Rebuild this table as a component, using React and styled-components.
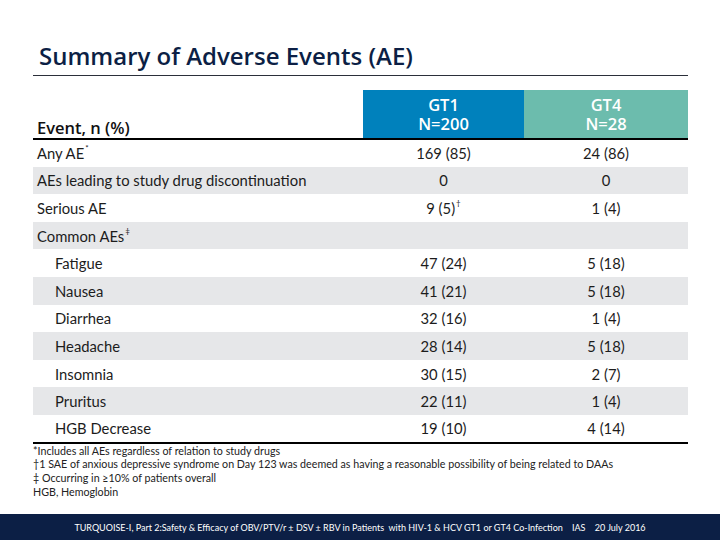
import React from 'react';
import styled, { createGlobalStyle } from 'styled-components';

const GlobalStyle = createGlobalStyle`
  html, body {
    margin: 0;
    padding: 0;
    background: #ffffff;
  }
  body {
    font-family: "Lato", "Liberation Sans", sans-serif;
  }
`;

const Slide = styled.div`
  width: 720px;
  height: 540px;
  display: flex;
  flex-direction: column;
  background: #ffffff;
  overflow: hidden;
`;

const Content = styled.div`
  padding: 0 32px 0 33px;
`;

const Title = styled.h1`
  margin: 40px 0 0 0;
  padding: 0 0 4px 6px;
  font-family: "Open Sans", sans-serif;
  font-weight: 600;
  font-size: 24px;
  line-height: 31px;
  color: #0c1f45;
  border-bottom: 1px solid #2b2f3a;
`;

const Table = styled.table`
  width: 655px;
  margin-top: 14px;
  border-collapse: collapse;
  table-layout: fixed;
  font-family: "Lato", "Liberation Sans", sans-serif;
  font-size: 14.8px;
  color: #1c1c1c;
`;

const HeadRow = styled.tr`
  height: 49px;
  border-bottom: 2px solid #000000;
`;

const EventHead = styled.th`
  text-align: left;
  vertical-align: bottom;
  padding: 0 0 0 4px;
  font-family: "Open Sans", sans-serif;
  font-weight: 600;
  font-size: 16.5px;
  line-height: 20px;
  color: #111111;
`;

const GroupHead = styled.th`
  background: ${p => p.$color};
  color: #ffffff;
  font-family: "Open Sans", sans-serif;
  font-weight: 600;
  font-size: 16.5px;
  text-align: center;
  vertical-align: middle;
  padding-top: 1px;
`;

const HeadLine = styled.div`
  line-height: 19px;
  height: 19px;
`;

const Row = styled.tr`
  height: 27.6px;
  background: ${p => (p.$shaded ? '#e6e7e9' : '#ffffff')};
  &:last-child {
    border-bottom: 2px solid #000000;
  }
`;

const Label = styled.td`
  padding: 0 0 0 ${p => (p.$indent ? '22px' : '4px')};
  white-space: nowrap;
`;

const Value = styled.td`
  text-align: center;
  white-space: nowrap;
`;

const Sup = styled.sup`
  font-size: 8px;
  vertical-align: top;
  position: relative;
  top: -1px;
  margin-left: 1px;
`;

const Notes = styled.div`
  padding: 0;
  font-size: 10.7px;
  line-height: 13.7px;
  color: #222222;
`;

const Footer = styled.div`
  margin-top: auto;
  height: 26px;
  background: #0c1f45;
  color: #ffffff;
  font-size: 9px;
  display: flex;
  align-items: center;
  justify-content: center;
  white-space: pre;
`;

const rows = [
  { label: 'Any AE', sup: '*', gt1: '169 (85)', gt4: '24 (86)' },
  { label: 'AEs leading to study drug discontinuation', gt1: '0', gt4: '0', shaded: true },
  { label: 'Serious AE', gt1: '9 (5)', gt1Sup: '†', gt4: '1 (4)' },
  { label: 'Common AEs', sup: '‡', gt1: '', gt4: '', shaded: true },
  { label: 'Fatigue', indent: true, gt1: '47 (24)', gt4: '5 (18)' },
  { label: 'Nausea', indent: true, gt1: '41 (21)', gt4: '5 (18)', shaded: true },
  { label: 'Diarrhea', indent: true, gt1: '32 (16)', gt4: '1 (4)' },
  { label: 'Headache', indent: true, gt1: '28 (14)', gt4: '5 (18)', shaded: true },
  { label: 'Insomnia', indent: true, gt1: '30 (15)', gt4: '2 (7)' },
  { label: 'Pruritus', indent: true, gt1: '22 (11)', gt4: '1 (4)', shaded: true },
  { label: 'HGB Decrease', indent: true, gt1: '19 (10)', gt4: '4 (14)' },
];

export default function App() {
  return (
    <Slide>
      <GlobalStyle />
      <Content>
        <Title>Summary of Adverse Events (AE)</Title>
        <Table>
          <colgroup>
            <col style={{ width: '330px' }} />
            <col style={{ width: '161px' }} />
            <col style={{ width: '164px' }} />
          </colgroup>
          <thead>
            <HeadRow>
              <EventHead>Event, n (%)</EventHead>
              <GroupHead $color="#0081bc">
                <HeadLine>GT1</HeadLine>
                <HeadLine>N=200</HeadLine>
              </GroupHead>
              <GroupHead $color="#6cbcad">
                <HeadLine>GT4</HeadLine>
                <HeadLine>N=28</HeadLine>
              </GroupHead>
            </HeadRow>
          </thead>
          <tbody>
            {rows.map((r, i) => (
              <Row key={i} $shaded={r.shaded}>
                <Label $indent={r.indent}>
                  {r.label}
                  {r.sup && <Sup>{r.sup}</Sup>}
                </Label>
                <Value>
                  {r.gt1}
                  {r.gt1Sup && <Sup>{r.gt1Sup}</Sup>}
                </Value>
                <Value>{r.gt4}</Value>
              </Row>
            ))}
          </tbody>
        </Table>
        <Notes>
          <div>*Includes all AEs regardless of relation to study drugs</div>
          <div>†1 SAE of anxious depressive syndrome on Day 123 was deemed  as having a reasonable possibility of being related to DAAs</div>
          <div>‡ Occurring in ≥10% of patients overall</div>
          <div>HGB, Hemoglobin</div>
        </Notes>
      </Content>
      <Footer>TURQUOISE-I, Part 2:Safety &amp; Efficacy of OBV/PTV/r ± DSV ± RBV in Patients  with HIV-1 &amp; HCV GT1 or GT4 Co-Infection    IAS    20 July 2016</Footer>
    </Slide>
  );
}
